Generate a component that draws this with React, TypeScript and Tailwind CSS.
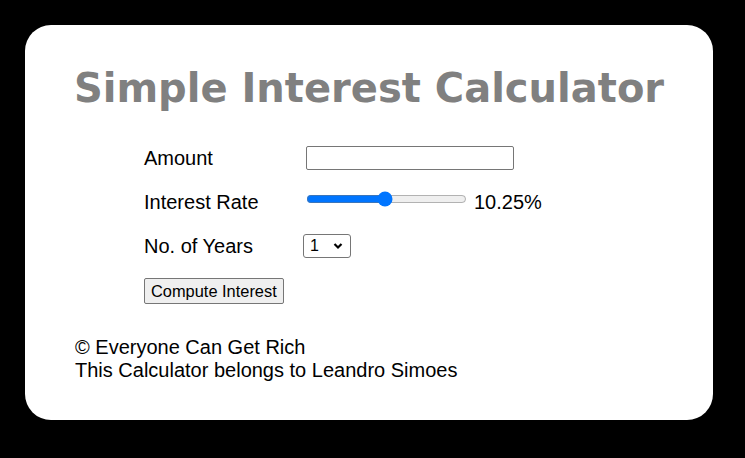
import { useState } from "react";

const arial = "font-['Liberation_Sans',Arial,sans-serif]";

export default function App() {
  const [rate, setRate] = useState(10.25);
  const [amount, setAmount] = useState("");
  const [years, setYears] = useState("1");

  return (
    <div className="min-h-[458px] w-[745px] bg-black pt-[25px] pl-[25px]">
      <div
        className={`${arial} w-[688px] h-[395px] bg-white rounded-[26px] px-[50px] pt-[40px] text-[20px] text-black`}
      >
        <h1 className="-mx-[10px] whitespace-nowrap font-['DejaVu_Sans',Verdana,sans-serif] font-bold text-[40px] leading-[47px] text-[#808080] text-center">
          Simple Interest Calculator
        </h1>

        <div className="mt-[24px] ml-[69px] grid grid-cols-[159px_auto] auto-rows-[44px] items-center leading-[23px]">
          <label htmlFor="amount">Amount</label>
          <div className="flex items-center">
            <input
              id="amount"
              type="number"
              value={amount}
              onChange={(e) => setAmount(e.target.value)}
              className="ml-[3px] w-[208px] h-[24px] border border-[#767676] rounded-[2px] px-[2px] text-[13px] outline-none"
            />
          </div>

          <label htmlFor="rate">Interest Rate</label>
          <div className="flex items-center">
            {/* track sits a few px above the text line */}
            <input
              id="rate"
              type="range"
              min={1}
              max={20}
              step={0.25}
              value={rate}
              onChange={(e) => setRate(Number(e.target.value))}
              className="ml-[3px] w-[161px] m-0 mb-[6px]"
            />
            <span className="ml-[7px]">{rate}%</span>
          </div>

          <label htmlFor="years">No. of Years</label>
          <div className="flex items-center">
            <div className="relative">
              <select
                id="years"
                value={years}
                onChange={(e) => setYears(e.target.value)}
                className="appearance-none block w-[48px] h-[24px] border border-[#767676] rounded-[3px] bg-white text-[16px] leading-[22px] pl-[6px] outline-none"
              >
                {Array.from({ length: 10 }, (_, i) => (
                  <option key={i + 1} value={i + 1}>
                    {i + 1}
                  </option>
                ))}
              </select>
              <svg
                className="pointer-events-none absolute left-[30px] top-[8px]"
                width="10"
                height="8"
                viewBox="0 0 10 8"
              >
                <path d="M1.5 2 L5 5.5 L8.5 2" fill="none" stroke="#000" strokeWidth="2.2" />
              </svg>
            </div>
          </div>
        </div>

        <div className="ml-[69px] mt-[10px] flex">
          <button
            type="button"
            className="h-[26px] px-[6px] bg-[#efefef] border border-[#767676] rounded-[2px] text-[16.4px] leading-[20px]"
          >
            Compute Interest
          </button>
        </div>

        <footer className="mt-[32px] leading-[23px]">
          <div>© Everyone Can Get Rich</div>
          <div>This Calculator belongs to Leandro Simoes</div>
        </footer>
      </div>
    </div>
  );
}
